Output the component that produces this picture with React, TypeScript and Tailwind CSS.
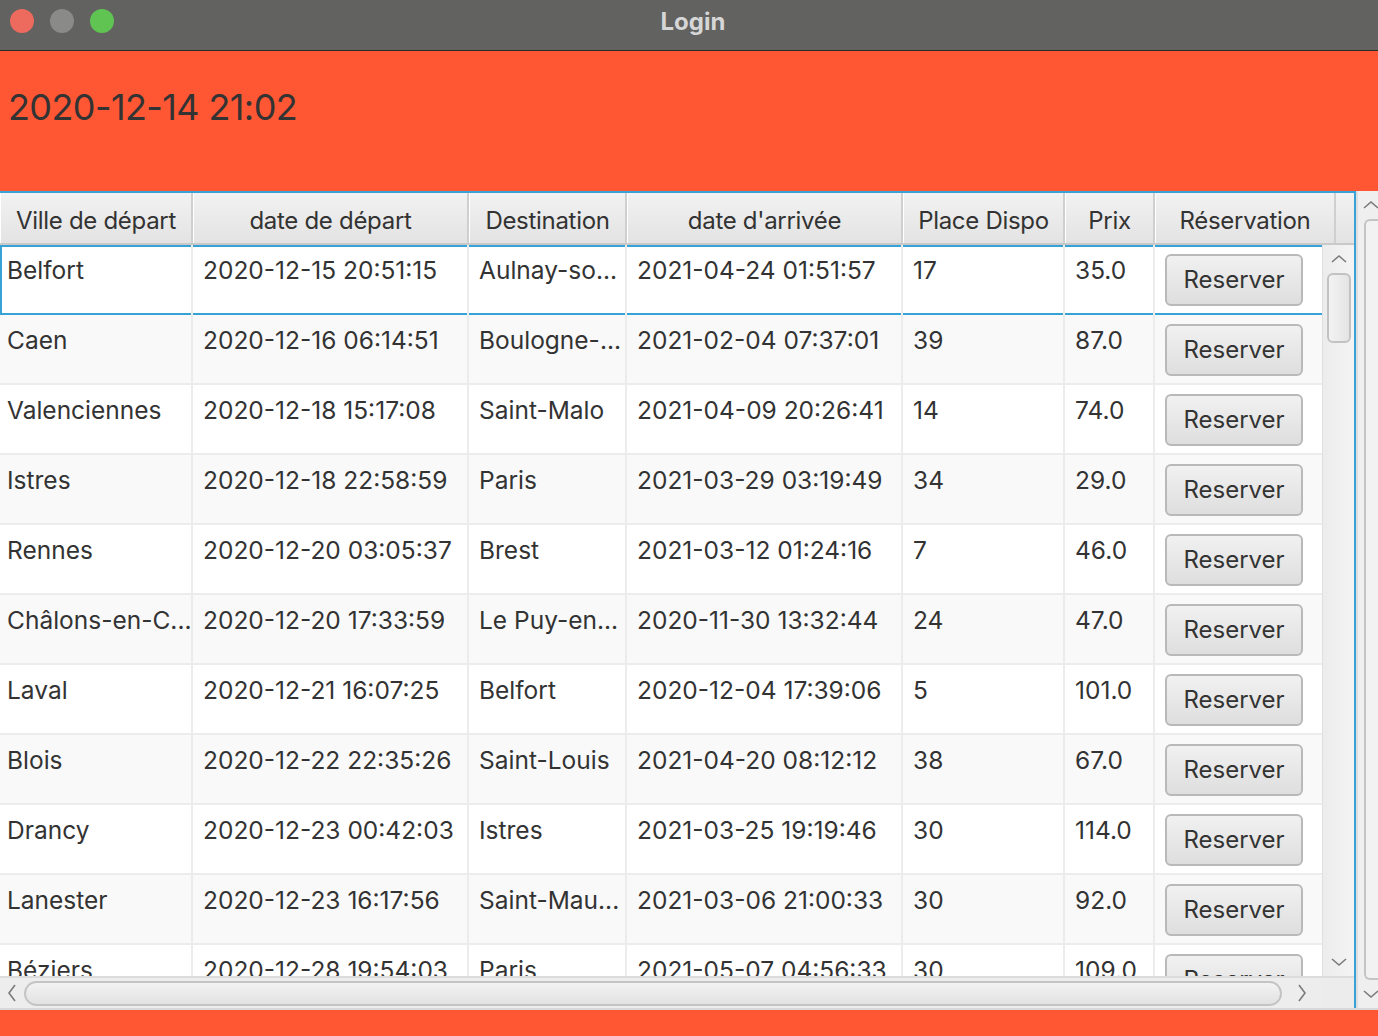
import type { ReactNode } from "react";

type Trajet = {
  depart: string;
  dateDepart: string;
  destination: string;
  dateArrivee: string;
  places: string;
  prix: string;
};

const trajets: Trajet[] = [
  { depart: "Belfort", dateDepart: "2020-12-15 20:51:15", destination: "Aulnay-so...", dateArrivee: "2021-04-24 01:51:57", places: "17", prix: "35.0" },
  { depart: "Caen", dateDepart: "2020-12-16 06:14:51", destination: "Boulogne-...", dateArrivee: "2021-02-04 07:37:01", places: "39", prix: "87.0" },
  { depart: "Valenciennes", dateDepart: "2020-12-18 15:17:08", destination: "Saint-Malo", dateArrivee: "2021-04-09 20:26:41", places: "14", prix: "74.0" },
  { depart: "Istres", dateDepart: "2020-12-18 22:58:59", destination: "Paris", dateArrivee: "2021-03-29 03:19:49", places: "34", prix: "29.0" },
  { depart: "Rennes", dateDepart: "2020-12-20 03:05:37", destination: "Brest", dateArrivee: "2021-03-12 01:24:16", places: "7", prix: "46.0" },
  { depart: "Châlons-en-C...", dateDepart: "2020-12-20 17:33:59", destination: "Le Puy-en...", dateArrivee: "2020-11-30 13:32:44", places: "24", prix: "47.0" },
  { depart: "Laval", dateDepart: "2020-12-21 16:07:25", destination: "Belfort", dateArrivee: "2020-12-04 17:39:06", places: "5", prix: "101.0" },
  { depart: "Blois", dateDepart: "2020-12-22 22:35:26", destination: "Saint-Louis", dateArrivee: "2021-04-20 08:12:12", places: "38", prix: "67.0" },
  { depart: "Drancy", dateDepart: "2020-12-23 00:42:03", destination: "Istres", dateArrivee: "2021-03-25 19:19:46", places: "30", prix: "114.0" },
  { depart: "Lanester", dateDepart: "2020-12-23 16:17:56", destination: "Saint-Mau...", dateArrivee: "2021-03-06 21:00:33", places: "30", prix: "92.0" },
  { depart: "Béziers", dateDepart: "2020-12-28 19:54:03", destination: "Paris", dateArrivee: "2021-05-07 04:56:33", places: "30", prix: "109.0" },
];

const headers = ["Ville de départ", "date de départ", "Destination", "date d'arrivée", "Place Dispo", "Prix", "Réservation"];

const cols = "grid grid-cols-[193px_276px_158px_276px_162px_90px_181px]";

function Chevron({ dir }: { dir: "up" | "down" | "left" | "right" }) {
  const points = {
    up: "2,9 9,3 16,9",
    down: "2,3 9,9 16,3",
    left: "9,2 3,10 9,18",
    right: "3,2 9,10 3,18",
  }[dir];
  const vertical = dir === "up" || dir === "down";
  return (
    <svg width={vertical ? 18 : 12} height={vertical ? 12 : 20} viewBox={vertical ? "0 0 18 12" : "0 0 12 20"}>
      <polyline points={points} fill="none" stroke="#7b7b7b" strokeWidth="1.6" />
    </svg>
  );
}

function Cell({ children, first }: { children: ReactNode; first?: boolean }) {
  return (
    <div
      className={`h-full border-r-2 border-[#ececec] pt-[9px] leading-[32px] whitespace-nowrap overflow-hidden ${
        first ? "pl-[7px]" : "pl-[10px]"
      }`}
    >
      {children}
    </div>
  );
}

export default function App() {
  return (
    <div className="w-[1378px] h-[1036px] flex flex-col overflow-hidden bg-[#ff5733] text-[#333] font-['Inter',sans-serif]">
      {/* barre de titre */}
      <div className="relative h-[51px] shrink-0 bg-[#626261] border-b border-[#2b2b2b] flex items-center justify-center">
        <div className="absolute left-[10px] top-[9px] flex gap-[16px]">
          <span className="w-[24px] h-[24px] rounded-full bg-[#ec6a5e]" />
          <span className="w-[24px] h-[24px] rounded-full bg-[#8a8a89]" />
          <span className="w-[24px] h-[24px] rounded-full bg-[#60c453]" />
        </div>
        <span className="ml-[8px] text-[24px] font-bold text-[#d6d6d6] -mt-[7px]">Login</span>
      </div>

      {/* date */}
      <div className="h-[140px] shrink-0 pl-[8px] pt-[34px]">
        <span className="text-[36px] leading-[44px] tracking-[-0.6px] text-[#333]">2020-12-14 21:02</span>
      </div>

      {/* zone tableau */}
      <div className="flex h-[817px] shrink-0 bg-[#f4f4f4]">
        <div className="w-[1356px] flex flex-col border-t-2 border-r-2 border-[#36a2d6] bg-white">
          {/* en-têtes */}
          <div className="flex h-[52px] shrink-0 border-b-2 border-[#c9c9c9]">
            <div className={cols}>
              {headers.map((h) => (
                <div
                  key={h}
                  className="flex items-center justify-center pt-[5px] border-r-2 border-[#cfcfcf] border-l border-l-white bg-gradient-to-b from-[#f2f2f2] to-[#e3e3e3] text-[24px] tracking-[-0.3px] whitespace-nowrap"
                >
                  {h}
                </div>
              ))}
            </div>
            <div className="w-[18px] bg-gradient-to-b from-[#f2f2f2] to-[#e3e3e3]" />
          </div>

          {/* lignes */}
          <div className="flex h-[731px] shrink-0">
            <div className="w-[1322px] overflow-hidden">
              <div className="w-[1336px]">
                {trajets.map((t, i) => (
                  <div
                    key={t.depart}
                    className={`${cols} h-[70px] text-[24.5px] ${
                      i === 0
                        ? "bg-white shadow-[inset_0_2px_0_#36a2d6,inset_0_-2px_0_#36a2d6,inset_2px_0_0_#36a2d6]"
                        : i % 2 === 1
                          ? "bg-[#f9f9f9] border-b-2 border-[#ececec]"
                          : "bg-white border-b-2 border-[#ececec]"
                    }`}
                  >
                    <Cell first>{t.depart}</Cell>
                    <Cell>{t.dateDepart}</Cell>
                    <Cell>{t.destination}</Cell>
                    <Cell>{t.dateArrivee}</Cell>
                    <Cell>{t.places}</Cell>
                    <Cell>{t.prix}</Cell>
                    <div className="pl-[10px] pt-[9px]">
                      <button className="w-[138px] h-[52px] rounded-[6px] border-2 border-[#b9b9b9] bg-gradient-to-b from-[#f1f1f1] to-[#dedede] text-[24px] text-[#333]">
                        Reserver
                      </button>
                    </div>
                  </div>
                ))}
              </div>
            </div>
            {/* barre verticale */}
            <div className="w-[32px] flex flex-col items-center bg-gradient-to-r from-[#ececec] to-[#f4f4f4] border-l border-[#e0e0e0]">
              <div className="h-[28px] flex items-center">
                <Chevron dir="up" />
              </div>
              <div className="w-[24px] h-[70px] rounded-[6px] border-2 border-[#c2c2c2] bg-gradient-to-r from-[#f3f3f3] to-[#e4e4e4]" />
              <div className="flex-1" />
              <div className="h-[28px] flex items-center">
                <Chevron dir="down" />
              </div>
            </div>
          </div>

          {/* barre horizontale */}
          <div className="flex h-[32px] shrink-0 border-t-2 border-[#dcdcdc] bg-[#ededed]">
            <div className="w-[1322px] flex items-center">
              <div className="w-[24px] flex justify-center">
                <Chevron dir="left" />
              </div>
              <div className="w-[1258px] h-[25px] rounded-full border-2 border-[#c4c4c4] bg-gradient-to-b from-[#f3f3f3] to-[#e2e2e2]" />
              <div className="flex-1 flex justify-center">
                <Chevron dir="right" />
              </div>
            </div>
            <div className="flex-1 bg-[#ececec]" />
          </div>
        </div>

        {/* barre verticale externe */}
        <div className="w-[22px] border-l-2 border-[#dedede] flex flex-col items-center bg-[#efefef]">
          <div className="h-[28px] flex items-center pl-[6px]">
            <Chevron dir="up" />
          </div>
          <div className="self-end w-[14px] flex-1 rounded-l-[6px] border-2 border-r-0 border-[#c4c4c4] bg-[#f2f2f2]" />
          <div className="h-[28px] flex items-center pl-[6px]">
            <Chevron dir="down" />
          </div>
        </div>
      </div>

      <div className="h-[2px] shrink-0 bg-[#d8d8d8]" />
      <div className="flex-1" />
    </div>
  );
}
